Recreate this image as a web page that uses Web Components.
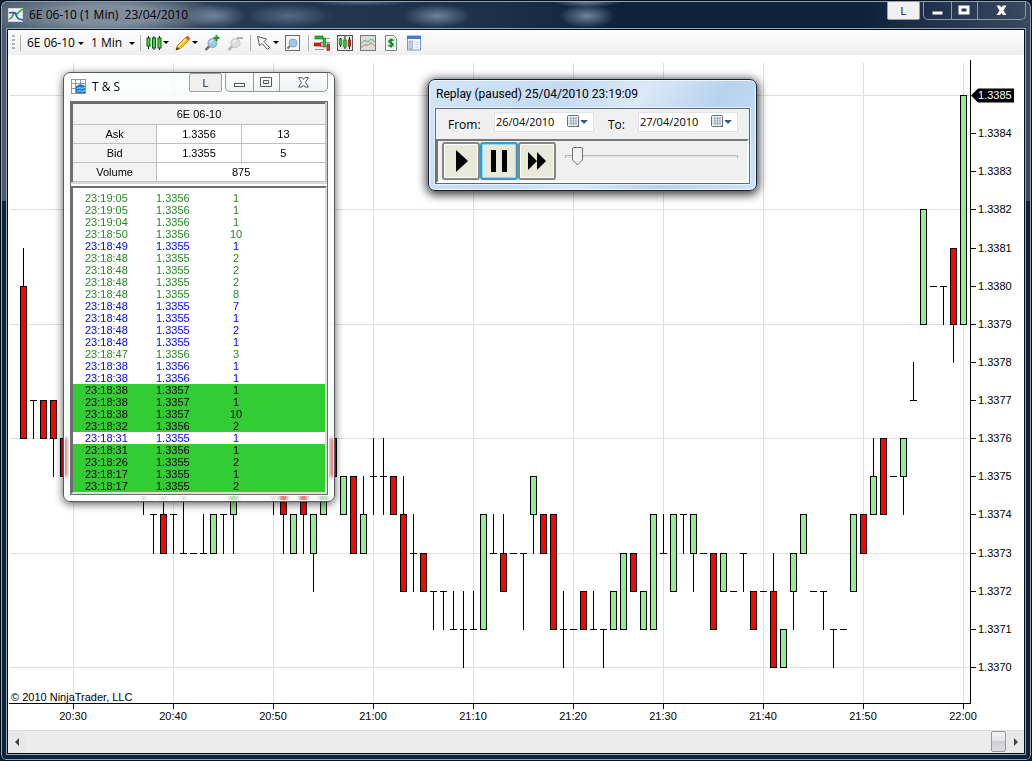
<!DOCTYPE html>
<html lang="en">
<head>
<meta charset="utf-8">
<title>6E 06-10 (1 Min) 23/04/2010</title>
<style>
  html, body { margin: 0; height: 100%; background: #0b1c33; }
  body { font: 11px/14px "Liberation Sans", Arial, sans-serif; color: #000; overflow: hidden; }
</style>
</head>
<body>
<chart-window></chart-window>

<script>
const UI_FONT = '"Open Sans", "Noto Sans", sans-serif';

const define = (name, html, setup) => {
  customElements.define(name, class extends HTMLElement {
    connectedCallback() {
      if (this.shadowRoot) return;
      const t = document.createElement('template');
      t.innerHTML = typeof html === 'function' ? html(this) : html;
      this.attachShadow({ mode: 'open' }).append(t.content.cloneNode(true));
      if (setup) setup(this, this.shadowRoot);
    }
  });
};

/* ---------- toolbar glyphs ---------- */
const lens = (c1, c2, ring) => `<path d="M6 10.500 1.500 15" stroke="${ring}" stroke-width="2.500"/><circle cx="8.500" cy="8" r="4.500" fill="${c1}" stroke="${c2}"/><path d="M6 8a3 3 0 0 1 3-2.500" stroke="#fff" fill="none"/>`;
const ICONS = {
  app: `<rect x=".5" y="1.500" width="14" height="13" fill="#fff" stroke="#cfd6dc"/><path d="M1 5h14M1 8.500h14M1 12h14M5 2v12M10 2v12" stroke="#b9c9da" stroke-width=".6"/><path d="M1 12.500 4 10l2-4.500L9 7l2-2 4-3" stroke="#2a9a3a" stroke-width="1.500" fill="none"/><path d="M1 6l3-.5 3 .5 2 4 2 2 4 1" stroke="#2458b4" stroke-width="1.500" fill="none"/>`,
  grid: `<rect x=".5" y=".5" width="14" height="14" fill="#fff" stroke="#8a97a6"/><path d="M0 4.500h15M0 9.500h15M4.500 0v15M9.500 0v15" stroke="#8a97a6"/><path d="M5 7.500c3-3 7-2 9-.5v7H5z" fill="#1672d6"/><path d="M6 9.500c3-2 4 1 8-1M6 12.500c3-2 4 1 8-1" stroke="#bfe0ff" fill="none"/>`,
  candles: `<path d="M2.500 1v13M8 1v14M13.500 1v14" stroke="#222"/><rect x="1" y="3" width="3" height="8" fill="#3cd83c" stroke="#0e5a0e"/><rect x="6.500" y="3" width="3" height="10" fill="#3cd83c" stroke="#0e5a0e"/><rect x="12" y="3" width="3" height="10" fill="#3cd83c" stroke="#0e5a0e"/>`,
  pencil: `<path d="M1 15l1.500-4.500L11 2l3 3-8.500 8.500z" fill="#ffc81e" stroke="#a87410" stroke-width=".8"/><path d="M10.500 2.500 12.500.7 15.300 3.500 13.500 5.500z" fill="#e04848"/><path d="M1 15l1-3 2 2z" fill="#222"/><path d="M4 11l7-7" stroke="#fff0a0"/>`,
  zoomin: lens('#9cc8ec', '#8aa2b8', '#6c7680') + `<path d="M12.500 0v6M9.500 3h6" stroke="#12a020" stroke-width="2"/>`,
  zoomout: lens('#dedede', '#c4c4c4', '#b4b4b4') + `<path d="M10 3h6" stroke="#b0b0b0" stroke-width="2"/>`,
  pointer: `<path d="M1.500 1.500 3.500 10.500 6 8.500 11.500 14.500 13.500 12.500 8 6.500 10.500 4z" fill="#fff" stroke="#555"/>`,
  zoombox: `<rect x=".5" y=".5" width="14" height="15" fill="#f4f6f8" stroke="#6c6c6c"/><path d="M6 10 2.500 13.500" stroke="#6c7680" stroke-width="2"/><circle cx="8" cy="8" r="4" fill="#9cc8ec" stroke="#8aa2b8"/>`,
  dom: `<path d="M6 3.500h10M6 7.500h10M6 11.500h10M1 14.500h9" stroke="#999"/><rect x="1" y="1" width="8" height="3" fill="#28b828" stroke="#156015" stroke-width=".6"/><rect x="0" y="8" width="7" height="3" fill="#e02020" stroke="#701010" stroke-width=".6"/><rect x="9" y="3" width="2.500" height="9" fill="#28c828" stroke="#156015" stroke-width=".6"/><rect x="13" y="9" width="2.500" height="6.500" fill="#e83030" stroke="#701010" stroke-width=".6"/>`,
  strategy: `<rect x=".5" y=".5" width="15" height="15" fill="#e6e6e6" stroke="#555"/><path d="M3.500 3v9M8 1v13M12.500 2v12" stroke="#222"/><rect x="2.300" y="4" width="2.500" height="6" fill="#2ccc2c" stroke="#156015" stroke-width=".6"/><rect x="6.700" y="5" width="2.500" height="7" fill="#2ccc2c" stroke="#156015" stroke-width=".6"/><rect x="11.200" y="5" width="2.500" height="6" fill="#e82020" stroke="#701010" stroke-width=".6"/>`,
  indicator: `<rect x=".5" y=".5" width="15" height="15" fill="#d8dcdc" stroke="#777"/><path d="M1 8.500 5 5l3 2 3-3 4 3" stroke="#58b078" fill="none"/><path d="M1 12.500 5 9.500l3 1 3-3 4 4" stroke="#e06868" fill="none"/>`,
  dollar: `<path d="M2.500.5h8l3 3v12h-11z" fill="#f6faf6" stroke="#7a8a7a"/><rect x="4" y="3.500" width="8" height="9" fill="#d8f0d8"/><path d="M10.500 5.500C9 4.500 6 4.500 6 6.500c0 2 4 1 4 3 0 1.800-3 1.800-4.500.8M8 3.500v9" stroke="#127a22" stroke-width="1.500" fill="none"/>`,
  panel: `<rect x="1.500" y="1" width="13" height="14" fill="#fff" stroke="#7a94d4"/><path d="M1 2.500h14" stroke="#4a74dc" stroke-width="3"/><rect x="3" y="6" width="3.500" height="8" fill="#c4d0f0" stroke="#7088c8" stroke-width=".6"/><path d="M8.500 7H13M8.500 9.500H13M8.500 12H13" stroke="#c0ccec"/>`,
  calendar: `<rect x=".5" y="1.500" width="11" height="11" rx="1" fill="#e8ecf2" stroke="#6a7078"/><path d="M2.500 4.500h7M2.500 7h7M2.500 9.500h7M4 3v8M6.500 3v8M9 3v8" stroke="#9aa4b4" stroke-width=".8"/><path d="M9 13l3-3v3z" fill="#6a7078"/>`
};

define('tool-icon', el => `
  <style>:host{display:block;width:16px;height:16px;flex:none} svg{display:block}</style>
  <svg width="16" height="16" viewBox="0 0 16 16" fill="none" aria-hidden="true">${ICONS[el.getAttribute('name')]}</svg>`);

/* ---------- one toolbar button, optionally with a drop arrow ---------- */
define('tool-button', el => `
  <style>
    :host{display:block;flex:none}
    button{display:flex;align-items:center;gap:1px;height:18px;min-width:18px;padding:0;border:0;background:none}
    :host([menu]) button{width:24px}
    i{width:0;height:0;border:3px solid transparent;border-top-color:#000;border-bottom:0}
    :host(:not([menu])) i{display:none}
  </style>
  <button type="button" aria-label="${el.getAttribute('label')}"><tool-icon name="${el.getAttribute('icon')}"></tool-icon><i></i></button>`);

define('chart-toolbar', `
  <style>
    :host{display:flex;align-items:center;gap:5px;height:25px;flex:none;padding-left:4px;
      background:linear-gradient(#fdfdfd,#efefef);font:11px/16px ${UI_FONT}}
    .grip{width:3px;height:16px;background:repeating-linear-gradient(#b4b4b4 0 2px,transparent 2px 4px)}
    .sep{width:1px;height:16px;background:#b0b0b0}
    select{appearance:none;border:0;margin:0;padding:0 0 0 2px;color:#000;font:inherit;font-size:12px;height:20px;
      background:url("data:image/svg+xml,%3Csvg xmlns='http://www.w3.org/2000/svg' width='6' height='3'%3E%3Cpath d='M0 0h6L3 3z'/%3E%3C/svg%3E") no-repeat right 9px}
    .sym{width:58px;padding-left:1px}.per{width:46px}
  </style>
  <span class="grip"></span><span class="sep"></span>
  <select class="sym" aria-label="Instrument"><option>6E 06-10</option></select>
  <select class="per" aria-label="Interval"><option>1 Min</option></select>
  <span class="sep"></span>
  <tool-button menu icon="candles" label="Chart style"></tool-button>
  <tool-button menu icon="pencil" label="Drawing tools"></tool-button>
  <tool-button icon="zoomin" label="Zoom in"></tool-button>
  <tool-button icon="zoomout" label="Zoom out"></tool-button>
  <span class="sep"></span>
  <tool-button menu icon="pointer" label="Cursor"></tool-button>
  <tool-button icon="zoombox" label="Data box"></tool-button>
  <span class="sep"></span>
  <tool-button icon="dom" label="Chart trader"></tool-button>
  <tool-button icon="strategy" label="Data series"></tool-button>
  <tool-button icon="indicator" label="Indicators"></tool-button>
  <tool-button icon="dollar" label="Strategies"></tool-button>
  <tool-button icon="panel" label="Properties"></tool-button>`);

/* ---------- link / minimise / maximise / close ---------- */
define('caption-buttons', `
  <style>
    :host{display:flex;align-items:flex-start;gap:3px;--line:#8b98a8;--face:transparent;--ink:#fff;--edge:none}
    button{padding:0;margin:0;border:0;background:none;display:flex;align-items:center;justify-content:center;height:18px}
    .link{width:33px;height:19px;box-sizing:border-box;background:#f0f0f0;border:1px solid #a0a0a0;border-radius:2px;
      color:#10204a;font:11px/14px "Liberation Sans",Arial,sans-serif}
    .group{display:flex;border:1px solid var(--line);border-top:0;border-radius:0 0 5px 5px;background:var(--face)}
    .min{width:27px}.max{width:27px;border-left:1px solid var(--line);border-right:1px solid var(--line)}.close{width:47px}
    :host([light]){--line:#9a9a9e;--face:linear-gradient(#fff,#f0f2f4);--ink:#fdfdfd;--edge:#555862}
    svg{fill:var(--ink);stroke:var(--edge);display:block}
  </style>
  <button class="link" type="button">L</button>
  <div class="group">
    <button class="min" type="button" aria-label="Minimize"><svg width="13" height="13"><rect x="1.500" y="7.500" width="10" height="3"/></svg></button>
    <button class="max" type="button" aria-label="Maximize"><svg width="13" height="13"><path fill-rule="evenodd" d="M.5 1.500h11v9H.5zM3.500 4.500h5v3h-5z"/></svg></button>
    <button class="close" type="button" aria-label="Close"><svg width="13" height="13"><path d="M1.500 1.500h3.500l1.500 2 1.500-2h3.500L8.500 6.500l3 4.500H8l-1.500-2L5 11H1.500l3-4.500z"/></svg></button>
  </div>`);

/* ---------- candlestick chart ----------
   A bar is open, close, high, low in ticks above 1.3370. */
const flat = (p, h = p, l = p) => [p, p, h, l];
const bar = (o, c, h = Math.max(o, c), l = Math.min(o, c)) => [o, c, h, l];
const BARS = [
  bar(10,6,11), flat(7,7,6), bar(7,6), bar(7,6,7,5), bar(6,5), flat(6), flat(6), flat(6), flat(6), flat(6),
  flat(5), flat(5), flat(5,5,4), flat(4,4,3), bar(4,3,5), flat(4,4,3), flat(3,5), flat(3), flat(3,4), bar(3,4),
  flat(4,4,3), bar(4,5,5,3), flat(6), flat(6), flat(6), flat(5,5,4), bar(5,4,5,3), bar(3,4), bar(5,4,5,3), bar(3,4,4,2),
  bar(4,5), bar(6,5), bar(4,5), bar(5,3), bar(3,4,5), flat(5,6,4), flat(5,6,4), bar(5,4), bar(4,2,5), flat(3,4,2),
  bar(3,2), flat(2,2,1), flat(2,2,1), flat(1,2), flat(1,2,0), flat(1,2), bar(1,4), flat(3,4), bar(3,2,4), flat(3),
  flat(3,3,1), bar(4,5,5,3), bar(4,3), bar(4,1), flat(1,2,0), flat(1), bar(2,1), flat(1,2), flat(1,1,0), bar(1,2),
  bar(1,3), bar(3,2), bar(1,2), bar(1,4), flat(3,4), bar(2,4), flat(4,4,3), bar(3,4,4,2), flat(3), bar(3,1),
  bar(2,3), flat(2), flat(3,3,2), bar(2,1), flat(2), bar(2,0,3), bar(0,1), bar(2,3,3,1), bar(3,4), flat(2),
  flat(2,2,1), flat(1,1,0), flat(1), bar(2,4), bar(4,3), bar(4,5,6), bar(6,4), flat(5), bar(5,6,6,4), flat(7,8),
  bar(9,12), flat(10), flat(10,10,9), bar(11,9,11,8), bar(9,15)
];
const TIMES = { 5:'20:30', 15:'20:40', 25:'20:50', 35:'21:00', 45:'21:10', 55:'21:20', 64:'21:30', 74:'21:40', 84:'21:50', 94:'22:00' };

define('candle-chart', `
  <style>
    :host{display:block;flex:1;min-height:0;background:#fff;overflow:hidden}
    svg{display:block;width:100%;height:100%;shape-rendering:crispEdges}
    text{font:11px "Liberation Sans",Arial,sans-serif;fill:#000}
    .grid{stroke:#dfdfdf}.axis{stroke:#000}.wick{stroke:#000}
    .up{fill:#90ee90;stroke:#000}.down{fill:#f00;stroke:#000}
    .tag{fill:#000;shape-rendering:auto}.tag + text{fill:#fff}
  </style>
  <svg role="img" aria-label="6E 06-10 one minute candlestick chart"></svg>`, (el, root) => {
  const svg = root.querySelector('svg');
  const draw = () => {
    const w = el.clientWidth, h = el.clientHeight;
    const axisX = w - 54, axisY = h - 27, top = 40, bottom = axisY - 36;
    const X = i => axisX - 7 - (BARS.length - 1 - i) * 10 + .5;
    const Y = p => Math.round(bottom - p * (bottom - top) / 15) + .5;
    const line = (c, x1, y1, x2, y2) => `<line class="${c}" x1="${x1}" y1="${y1}" x2="${x2}" y2="${y2}"/>`;
    let s = '';
    for (let p = 0; p <= 15; p += 3) s += line('grid', 2, Y(p), axisX, Y(p));
    for (const i in TIMES) s += line('grid', X(+i), 8, X(+i), axisY);
    BARS.forEach(([o, c, hi, lo], i) => {
      const x = X(i);
      if (hi !== lo) s += line('wick', x, Y(hi) - .5, x, Y(lo) + .5);
      if (o === c) s += line('wick', x - 3.5, Y(o), x + 3.5, Y(o));
      else s += `<rect class="${c > o ? 'up' : 'down'}" x="${x - 3}" y="${Y(Math.max(o, c))}" width="6" height="${Y(Math.min(o, c)) - Y(Math.max(o, c))}"/>`;
    });
    s += line('axis', axisX + .5, 5, axisX + .5, axisY + 1) + line('axis', 1, axisY + .5, axisX + 1, axisY + .5);
    for (let p = 0; p <= 15; p++) {
      if (p === 15) s += `<path class="tag" d="M${axisX + 1} ${Y(p)}l7-7h36v14h-36z"/>`;
      else s += line('axis', axisX + 1, Y(p), axisX + 6, Y(p));
      s += `<text x="${axisX + 8}" y="${Y(p) + 3.5}">${(1.337 + p / 10000).toFixed(4)}</text>`;
    }
    for (const i in TIMES) s += line('axis', X(+i), axisY + 1, X(+i), axisY + 6)
      + `<text text-anchor="middle" x="${X(+i) - .5}" y="${axisY + 17}">${TIMES[i]}</text>`;
    s += `<text x="3" y="${axisY - 2}">© 2010 NinjaTrader, LLC</text>`;
    svg.innerHTML = s;
  };
  draw();
  new ResizeObserver(draw).observe(el);
});

define('scroll-strip', `
  <style>
    :host{display:flex;align-items:stretch;height:23px;flex:none;box-sizing:border-box;background:#ececec;border-top:1px solid #dcdcdc}
    button{width:17px;padding:0;border:0;background:#e8e8e8;display:flex;align-items:center;justify-content:center}
    .track{flex:1;display:flex;justify-content:flex-end;padding-right:1px}
    .thumb{width:15px;box-sizing:border-box;border:1px solid #979797;border-radius:2px;margin-bottom:1px;background:linear-gradient(#f4f4f4,#e4e4e6 45%,#cfd0d4 50%,#dcdce0)}
  </style>
  <button type="button" aria-label="Scroll left"><svg width="4" height="8"><path d="M4 0v8L0 4z" fill="#444"/></svg></button>
  <div class="track"><div class="thumb"></div></div>
  <button type="button" aria-label="Scroll right"><svg width="4" height="8"><path d="M0 0v8l4-4z" fill="#444"/></svg></button>`);

/* ---------- time and sales ---------- */
const TRADES = `23:19:05 1.3356 1 a|23:19:05 1.3356 1 a|23:19:04 1.3356 1 a|23:18:50 1.3356 10 a|23:18:49 1.3355 1 b|23:18:48 1.3355 2 a|23:18:48 1.3355 2 a|23:18:48 1.3355 2 a|23:18:48 1.3355 8 a|23:18:48 1.3355 7 b|23:18:48 1.3355 1 b|23:18:48 1.3355 2 b|23:18:48 1.3355 1 b|23:18:47 1.3356 3 a|23:18:38 1.3356 1 b|23:18:38 1.3356 1 b|23:18:38 1.3357 1 x|23:18:38 1.3357 1 x|23:18:38 1.3357 10 x|23:18:32 1.3356 2 x|23:18:31 1.3355 1 b|23:18:31 1.3356 1 x|23:18:26 1.3355 2 x|23:18:17 1.3355 1 x|23:18:17 1.3355 2 x`
  .split('|').map(r => r.split(' '));

define('time-sales', `
  <style>
    :host{display:block;box-sizing:border-box;width:272px;padding:0 6px 6px;border:1px solid #55585c;border-radius:7px;
      background:rgba(250,252,252,.45);backdrop-filter:blur(2px);box-shadow:inset 0 0 0 1px #fff,0 2px 8px rgba(0,0,0,.65)}
    header{display:flex;align-items:flex-start;height:28px}
    tool-icon{margin:6px 5px 0 1px}
    h2{flex:1;margin:6px 0 0;font:12px/16px ${UI_FONT}}
    .frame{border:1px solid #6e6e6e;background:#fff;box-shadow:0 0 0 1px #fff}
    table{width:100%;border-collapse:collapse;table-layout:fixed;text-align:center}
    .quote{border:2px solid #6e6e6e;border-right:2px solid #c8c8c8;border-bottom:0;box-sizing:border-box;font-size:11px}
    .quote th,.quote td{font-weight:400;padding:0;height:18px;line-height:14px;border:1px solid #c0c0c0}
    .quote th{background:#f3f3f3}
    .quote .head th{height:20px}
    .rule{height:2px;background:#d8d8d8}
    .list{border:2px solid #6e6e6e;border-right-color:#ddd;border-bottom-color:#ddd;padding-top:4px;margin-top:2px;background:#fff}
    .list table{text-align:left}
    .list td{height:12px;line-height:12px;padding:0}
    .list .time{width:71px;padding-left:12px}
    .list .price{width:60px}
    .list .size{width:40px;text-align:center}
    .a{color:#228b22}.b{color:#00f}.x{background:#32cd32}
  </style>
  <header><tool-icon name="grid"></tool-icon><h2>T &amp; S</h2><caption-buttons light></caption-buttons></header>
  <div class="frame">
    <table class="quote">
      <tr class="head"><th colspan="3">6E 06-10</th></tr>
      <tr><th scope="row">Ask</th><td>1.3356</td><td>13</td></tr>
      <tr><th scope="row">Bid</th><td>1.3355</td><td>5</td></tr>
      <tr><th scope="row">Volume</th><td colspan="2">875</td></tr>
    </table>
    <div class="rule"></div>
    <div class="list"><table aria-label="Trades"><tbody class="trades"></tbody></table></div>
  </div>`, (el, root) => {
  root.querySelector('.trades').innerHTML = TRADES.map(([t, p, n, k]) =>
    `<tr class="${k}"><td class="time">${t}</td><td class="price">${p}</td><td class="size">${n}</td><td></td></tr>`).join('');
});

/* ---------- replay panel ---------- */
define('date-field', el => `
  <style>
    :host{display:flex;align-items:flex-start}
    label{font:12px/16px ${UI_FONT};width:46px;padding-top:5px}
    :host([short]) label{width:30px}
    .box{display:flex;align-items:center;width:100px;height:20px;box-sizing:border-box;border:1px solid #e2e3ea;background:#fff}
    input{width:71px;min-width:0;border:0;padding:0 0 0 1px;margin:0;background:none;font:11px/16px ${UI_FONT};color:#000}
    button{display:flex;align-items:center;padding:0;border:0;background:none}
    i{border:4px solid transparent;border-top-color:#3c5a8c;border-bottom:0;margin-left:-3px}
  </style>
  <label for="d">${el.getAttribute('label')}</label>
  <div class="box"><input id="d" type="text" value="${el.getAttribute('value')}"><button type="button" aria-label="Open calendar"><tool-icon name="calendar"></tool-icon><i></i></button></div>`);

define('replay-panel', `
  <style>
    :host{display:block;box-sizing:border-box;width:329px;padding:0 6px 6px;border:1px solid #16222e;border-radius:7px;
      background:linear-gradient(125deg,#d4e5f7,#c3daf2 35%,#dbe9f8 55%,#b8d2ee 75%,#cfe2f6);
      box-shadow:inset 0 0 0 1px #eef6ff,0 2px 10px 2px rgba(0,0,0,.75)}
    h2{margin:0;padding:6px 0 6px 1px;font:12px/16px Roboto,${UI_FONT}}
    .body{border:1px solid #5c6a7a;background:#f0f0f0;box-shadow:0 0 0 1px #e6f2ff}
    .dates{display:flex;gap:14px;height:30px;align-items:flex-start;padding:3px 0 0 12px;box-sizing:border-box}
    .player{display:flex;align-items:center;height:44px;box-sizing:border-box;padding:0 9px 0 4px;border:2px solid #767676;border-right-color:#fff;border-bottom-color:#fff}
    .player button{width:38px;height:38px;padding:0;border:2px solid #868686;border-radius:3px;background:#e9e9d9;
      box-shadow:inset 0 0 0 1px #fff;display:flex;align-items:center;justify-content:center}
    .player .on{border-color:#2f9fd0;box-shadow:inset 0 0 0 1px #8adcf6}
    input{appearance:none;flex:1;min-width:0;height:20px;margin:0 0 8px 9px;background:none}
    input::-webkit-slider-runnable-track{height:4px;box-sizing:border-box;border:1px solid #b8b8b8;border-bottom-color:#fff;background:#e4e6e6}
    input::-webkit-slider-thumb{appearance:none;width:11px;height:19px;margin-top:-9px;
      background:url("data:image/svg+xml,%3Csvg xmlns='http://www.w3.org/2000/svg' width='11' height='19'%3E%3Cpath d='M.5 2q0-1.500 1.500-1.500h7q1.500 0 1.500 1.500v11l-5 5-5-5z' fill='%23f2f2f2' stroke='%23707070'/%3E%3C/svg%3E")}
  </style>
  <h2>Replay (paused) 25/04/2010 23:19:09</h2>
  <div class="body">
    <div class="dates"><date-field label="From:" value="26/04/2010"></date-field><date-field short label="To:" value="27/04/2010"></date-field></div>
    <div class="player">
      <button type="button" aria-label="Play"><svg width="14" height="24"><path d="M2 1v22L14 12z"/></svg></button>
      <button type="button" class="on" aria-label="Pause"><svg width="18" height="24"><path d="M1 1h5v22H1zM12 1h5v22h-5z"/></svg></button>
      <button type="button" aria-label="Fast forward"><svg width="20" height="18"><path d="M1 0v18l9-9zM10 0v18l9-9z"/></svg></button>
      <input type="range" aria-label="Replay speed" min="0" max="100" value="4">
    </div>
  </div>`);

/* ---------- outer window ---------- */
define('chart-window', `
  <style>
    :host{display:flex;flex-direction:column;position:relative;box-sizing:border-box;height:100vh;padding:0 5px 5px;
      border:1px solid #05101e;border-radius:7px 7px 6px 6px;
      background:
        radial-gradient(30px 12px at 215px 15px,rgba(150,175,200,.6),transparent),
        radial-gradient(44px 12px at 288px 15px,rgba(130,160,190,.5),transparent),
        radial-gradient(34px 12px at 436px 15px,rgba(160,185,210,.6),transparent),
        radial-gradient(28px 12px at 586px 15px,rgba(160,185,210,.65),transparent),
        radial-gradient(34px 5px at 586px 1px,rgba(160,185,210,.6),transparent),
        radial-gradient(50px 4px at 360px 1px,rgba(160,185,210,.4),transparent),
        radial-gradient(120px 24px at 104px 14px,#7f8d9c 40%,transparent),
        linear-gradient(90deg,#4c5c70,#24384f 24%,#1c3049 48%,#0e223b 60%,#0e223b 84%,#3a4a60) top/100% 200px no-repeat,
        #10233c;
      box-shadow:inset 0 0 0 1px #8fa3b4}
    header{display:flex;align-items:flex-start;height:27px;flex:none}
    tool-icon{margin:6px 5px 0 2px}
    h1{flex:1;margin:6px 0 0;font:12px/16px ${UI_FONT};white-space:pre}
    .client{flex:1;min-height:0;display:flex;flex-direction:column;border:1px solid #050c16;box-shadow:0 0 0 1px #94a6b6;overflow:hidden;background:#fff;margin:1px}
    time-sales{position:absolute;left:62px;top:71px}
    replay-panel{position:absolute;left:427px;top:78px}
  </style>
  <header><tool-icon name="app"></tool-icon><h1>6E 06-10 (1 Min)  23/04/2010</h1><caption-buttons></caption-buttons></header>
  <div class="client">
    <chart-toolbar></chart-toolbar>
    <candle-chart></candle-chart>
    <scroll-strip></scroll-strip>
  </div>
  <time-sales></time-sales>
  <replay-panel></replay-panel>`);
</script>
</body>
</html>
